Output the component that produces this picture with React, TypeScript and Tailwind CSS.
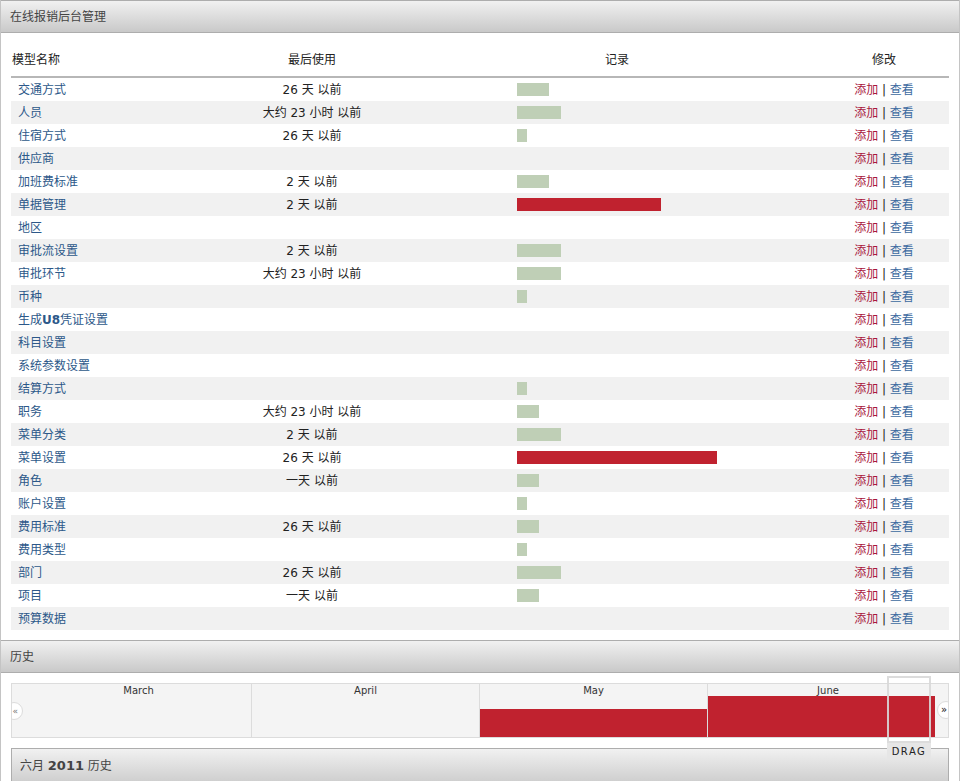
import React from 'react';

interface Row {
  name: React.ReactNode;
  used: string;
  bar: number;
  hot?: boolean;
}

const rows: Row[] = [
  { name: '交通方式', used: '26 天 以前', bar: 32 },
  { name: '人员', used: '大约 23 小时 以前', bar: 44 },
  { name: '住宿方式', used: '26 天 以前', bar: 10 },
  { name: '供应商', used: '', bar: 0 },
  { name: '加班费标准', used: '2 天 以前', bar: 32 },
  { name: '单据管理', used: '2 天 以前', bar: 144, hot: true },
  { name: '地区', used: '', bar: 0 },
  { name: '审批流设置', used: '2 天 以前', bar: 44 },
  { name: '审批环节', used: '大约 23 小时 以前', bar: 44 },
  { name: '币种', used: '', bar: 10 },
  {
    name: (
      <>
        生成<b>U8</b>凭证设置
      </>
    ),
    used: '',
    bar: 0,
  },
  { name: '科目设置', used: '', bar: 0 },
  { name: '系统参数设置', used: '', bar: 0 },
  { name: '结算方式', used: '', bar: 10 },
  { name: '职务', used: '大约 23 小时 以前', bar: 22 },
  { name: '菜单分类', used: '2 天 以前', bar: 44 },
  { name: '菜单设置', used: '26 天 以前', bar: 200, hot: true },
  { name: '角色', used: '一天 以前', bar: 22 },
  { name: '账户设置', used: '', bar: 10 },
  { name: '费用标准', used: '26 天 以前', bar: 22 },
  { name: '费用类型', used: '', bar: 10 },
  { name: '部门', used: '26 天 以前', bar: 44 },
  { name: '项目', used: '一天 以前', bar: 22 },
  { name: '预算数据', used: '', bar: 0 },
];

const font = { fontFamily: '"DejaVu Sans", "Noto Sans CJK SC", sans-serif' };

const SectionBar: React.FC<{ children: React.ReactNode }> = ({ children }) => (
  <div className="h-[33px] flex items-center pt-[1px] px-[9px] text-[12px] text-[#444] bg-gradient-to-b from-[#f1f1f1] to-[#c9c9c9] border-y border-[#adadad]">
    {children}
  </div>
);

const App: React.FC = () => {
  return (
    <div className="w-[960px] bg-white border-x border-[#c4c4c4] text-[12px] text-[#222]" style={font}>
      <SectionBar>在线报销后台管理</SectionBar>

      <div className="px-[10px] pt-[9px] pb-[10px]">
        <div className="grid grid-cols-[198px_206px_404px_130px] h-[36px] items-center pt-[1px] border-b-2 border-[#b7b7b7]">
          <div className="pl-[1px]">模型名称</div>
          <div className="text-center">最后使用</div>
          <div className="text-center">记录</div>
          <div className="text-center">修改</div>
        </div>
        {rows.map((row, i) => (
          <div
            key={i}
            className={`grid grid-cols-[198px_206px_404px_130px] h-[23px] items-center ${
              i % 2 === 1 ? 'bg-[#f1f1f1]' : 'bg-white'
            }`}
          >
            <div className="pl-[7px] text-[#2c5889]">{row.name}</div>
            <div className="text-center">{row.used}</div>
            <div className="flex justify-center">
              <div className="w-[200px] h-[13px]">
                {row.bar > 0 && (
                  <div
                    className={`h-[13px] ${row.hot ? 'bg-[#c0222f]' : 'bg-[#bfcfb6]'}`}
                    style={{ width: row.bar }}
                  />
                )}
              </div>
            </div>
            <div className="text-center">
              <span className="text-[#a8163d]">添加</span>
              <span className="text-[#222]"> | </span>
              <span className="text-[#3c6aa0]">查看</span>
            </div>
          </div>
        ))}
      </div>

      <SectionBar>历史</SectionBar>

      <div className="px-[10px] pt-[10px]">
        <div className="relative">
          <div className="relative h-[55px] border border-[#dcdcdc] bg-[#f4f4f4] overflow-hidden flex text-[10px] text-[#333]">
            {[
              { m: 'March', w: 'w-[240px] pl-[14px]', h: 0, bw: '' },
              { m: 'April', w: 'w-[228px]', h: 0, bw: '' },
              { m: 'May', w: 'w-[228px]', h: 28, bw: 'w-full' },
              { m: 'June', w: 'flex-1', h: 41, bw: 'w-[227px]' },
            ].map((c, i) => (
              <div
                key={c.m}
                className={`${c.w} relative h-full ${i < 3 ? 'border-r border-[#dcdcdc]' : ''}`}
              >
                <div className="text-center leading-[12px] pt-[1px]">{c.m}</div>
                {c.h > 0 && (
                  <div
                    className={`absolute bottom-0 left-0 ${c.bw} bg-[#c0222f]`}
                    style={{ height: c.h }}
                  />
                )}
              </div>
            ))}
            <div className="absolute left-[-7px] top-[18px] w-[18px] h-[18px] rounded-full bg-white border border-[#dcdcdc] flex items-center justify-end pr-[4px] text-[9px] text-[#777] leading-none">
              «
            </div>
            <div className="absolute right-[-7px] top-[17px] w-[18px] h-[18px] rounded-full bg-white border border-[#dcdcdc] flex items-center justify-start pl-[3px] text-[10px] text-[#111] leading-none">
              »
            </div>
          </div>

          <div className="absolute left-[876px] top-[-7px] w-[44px] z-10">
            <div className="h-[67px] border-2 border-[#d8d8d8]/90" />
            <div className="h-[17px] bg-[#e6e6e6] text-[10px] tracking-[1.5px] text-[#222] flex items-center justify-center">
              DRAG
            </div>
          </div>
        </div>

        <div className="mt-[10px] h-[40px] border border-[#adadad] bg-gradient-to-b from-[#f1f1f1] to-[#c9c9c9] flex items-start pt-[7px] px-[8px] text-[12px] text-[#444]">
          <span>
            六月 <b className="text-[13px] text-[#444]">2011</b> 历史
          </span>
        </div>
      </div>
    </div>
  );
};

export default App;
